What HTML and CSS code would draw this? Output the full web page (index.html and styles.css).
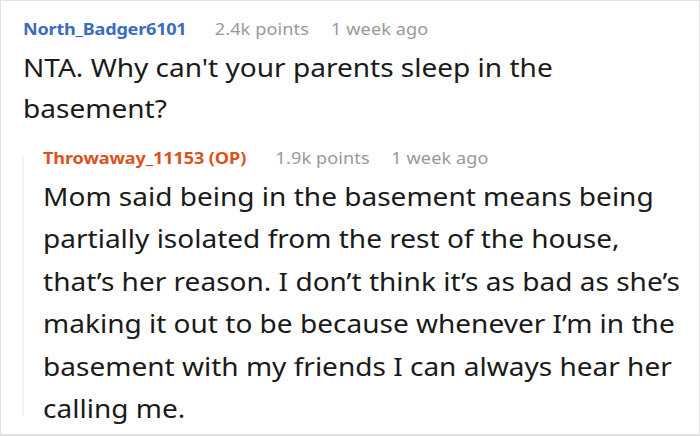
FILE: index.html
```html
<!DOCTYPE html>
<html>
<head>
<meta charset="utf-8">
<link rel="stylesheet" href="styles.css">
</head>
<body>
<div class="frame">
  <div class="content">
    <div class="comment">
      <div class="meta"><span class="user">North_Badger6101</span><span class="points">2.4k points</span><span class="time">1 week ago</span></div>
      <p class="text">NTA. Why can't your parents sleep in the<br>basement?</p>
    </div>
    <div class="reply">
      <div class="thread-line"></div>
      <div class="reply-body">
        <div class="meta"><span class="user op">Throwaway_11153 (OP)</span><span class="points">1.9k points</span><span class="time">1 week ago</span></div>
        <p class="text">Mom said being in the basement means being<br>partially isolated from the rest of the house,<br>that’s her reason. I don’t think it’s as bad as she’s<br>making it out to be because whenever I’m in the<br>basement with my friends I can always hear her<br>calling me.</p>
      </div>
    </div>
  </div>
</div>
</body>
</html>
```

FILE: styles.css
```css
html, body {
  margin: 0;
  padding: 0;
  background: #fff;
}
.frame {
  box-sizing: border-box;
  width: 700px;
  height: 436px;
  border: 1px solid #e2e2e2;
  border-bottom-width: 2px;
  font-family: "Noto Sans", "Open Sans", sans-serif;
  color: #1a1a1a;
  overflow: hidden;
}
.content {
  box-sizing: border-box;
  width: 618px;
  padding: 16px 0 0 18.5px;
  transform: scaleX(1.13);
  transform-origin: 0 0;
}
.comment {
  padding-left: 1px;
}
.meta {
  font-size: 16px;
  line-height: 24px;
  height: 24px;
  white-space: nowrap;
}
.user {
  font-weight: 700;
  color: #3b6cbf;
}
.user.op {
  color: #d9521d;
}
.comment .user {
  letter-spacing: -0.2px;
}
.reply .user {
  letter-spacing: -0.1px;
}
.points {
  color: #999;
  margin-left: 25px;
  letter-spacing: 0.1px;
}
.time {
  color: #999;
  margin-left: 19.5px;
  letter-spacing: 0.1px;
}
.text {
  margin: 6px 0 0 0;
  font-size: 24.8px;
  line-height: 41px;
  white-space: nowrap;
}
.reply {
  display: flex;
  margin-top: 17px;
}
.thread-line {
  flex: none;
  width: 1.8px;
  background: #ececec;
  margin: 9px 0 14px 0;
}
.reply-body {
  padding-left: 16.9px;
}
.reply .meta .points {
  margin-left: 26px;
}
.reply .meta .time {
  margin-left: 19px;
}
.reply .text {
  margin-top: 4.5px;
  font-size: 24.8px;
  line-height: 42.6px;
}
```
